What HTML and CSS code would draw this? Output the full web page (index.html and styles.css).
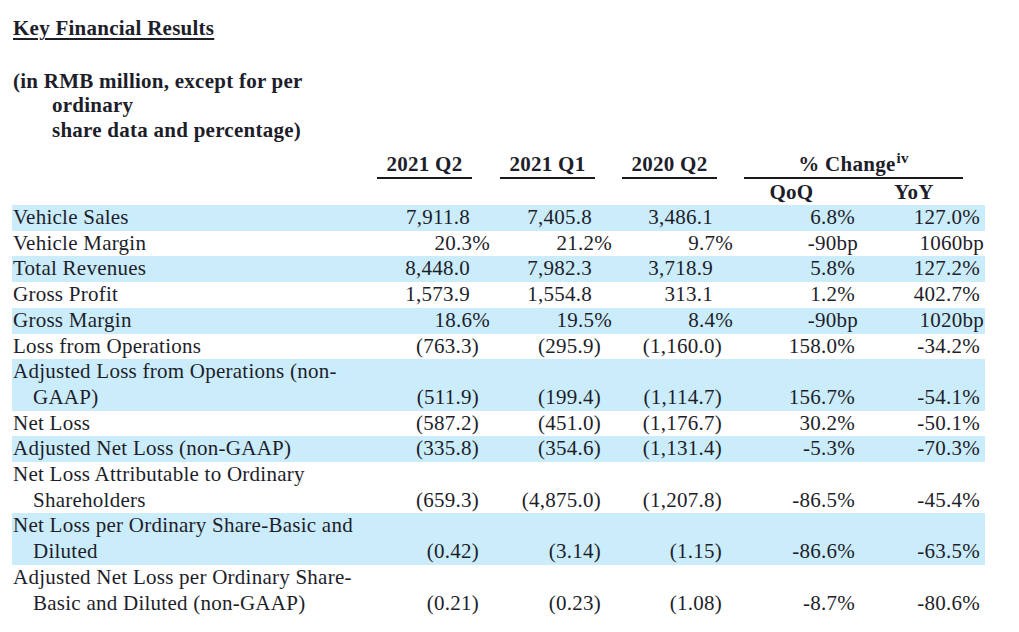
FILE: index.html
```html
<!DOCTYPE html>
<html lang="en">
<head>
<meta charset="utf-8">
<title>Key Financial Results</title>
<link rel="stylesheet" href="styles.css">
</head>
<body>
<div class="page">
  <h1 class="title">Key Financial Results</h1>
  <p class="units">(in RMB million, except for per<br>ordinary<br>share data and percentage)</p>
  <table class="results">
    <colgroup>
      <col class="c-label"><col class="c-a"><col class="c-b"><col class="c-c"><col class="c-qoq"><col class="c-yoy">
    </colgroup>
    <thead>
      <tr class="h1">
        <th></th>
        <th><div class="hl">2021 Q2</div></th>
        <th><div class="hl">2021 Q1</div></th>
        <th><div class="hl">2020 Q2</div></th>
        <th colspan="2"><div class="hl wide">% Change<sup>iv</sup></div></th>
      </tr>
      <tr class="h2">
        <th></th><th></th><th></th><th></th>
        <th class="qoq">QoQ</th>
        <th class="yoy">YoY</th>
      </tr>
    </thead>
    <tbody>
      <tr class="band">
        <td class="lbl">Vehicle Sales</td>
        <td class="n">7,911.8</td><td class="n">7,405.8</td><td class="n">3,486.1</td>
        <td class="q p">6.8%</td><td class="y p">127.0%</td>
      </tr>
      <tr>
        <td class="lbl">Vehicle Margin</td>
        <td class="p">20.3%</td><td class="p">21.2%</td><td class="p">9.7%</td>
        <td class="q b">-90bp</td><td class="y b">1060bp</td>
      </tr>
      <tr class="band">
        <td class="lbl">Total Revenues</td>
        <td class="n">8,448.0</td><td class="n">7,982.3</td><td class="n">3,718.9</td>
        <td class="q p">5.8%</td><td class="y p">127.2%</td>
      </tr>
      <tr>
        <td class="lbl">Gross Profit</td>
        <td class="n">1,573.9</td><td class="n">1,554.8</td><td class="n">313.1</td>
        <td class="q p">1.2%</td><td class="y p">402.7%</td>
      </tr>
      <tr class="band">
        <td class="lbl">Gross Margin</td>
        <td class="p">18.6%</td><td class="p">19.5%</td><td class="p">8.4%</td>
        <td class="q b">-90bp</td><td class="y b">1020bp</td>
      </tr>
      <tr>
        <td class="lbl">Loss from Operations</td>
        <td class="ng">(763.3)</td><td class="ng">(295.9)</td><td class="ng">(1,160.0)</td>
        <td class="q p">158.0%</td><td class="y p">-34.2%</td>
      </tr>
      <tr class="band">
        <td class="lbl">Adjusted Loss from Operations (non-GAAP)</td>
        <td class="ng">(511.9)</td><td class="ng">(199.4)</td><td class="ng">(1,114.7)</td>
        <td class="q p">156.7%</td><td class="y p">-54.1%</td>
      </tr>
      <tr>
        <td class="lbl">Net Loss</td>
        <td class="ng">(587.2)</td><td class="ng">(451.0)</td><td class="ng">(1,176.7)</td>
        <td class="q p">30.2%</td><td class="y p">-50.1%</td>
      </tr>
      <tr class="band">
        <td class="lbl">Adjusted Net Loss (non-GAAP)</td>
        <td class="ng">(335.8)</td><td class="ng">(354.6)</td><td class="ng">(1,131.4)</td>
        <td class="q p">-5.3%</td><td class="y p">-70.3%</td>
      </tr>
      <tr>
        <td class="lbl">Net Loss Attributable to Ordinary Shareholders</td>
        <td class="ng">(659.3)</td><td class="ng">(4,875.0)</td><td class="ng">(1,207.8)</td>
        <td class="q p">-86.5%</td><td class="y p">-45.4%</td>
      </tr>
      <tr class="band">
        <td class="lbl">Net Loss per Ordinary Share-Basic and Diluted</td>
        <td class="ng">(0.42)</td><td class="ng">(3.14)</td><td class="ng">(1.15)</td>
        <td class="q p">-86.6%</td><td class="y p">-63.5%</td>
      </tr>
      <tr>
        <td class="lbl">Adjusted Net Loss per Ordinary Share-Basic and Diluted (non-GAAP)</td>
        <td class="ng">(0.21)</td><td class="ng">(0.23)</td><td class="ng">(1.08)</td>
        <td class="q p">-8.7%</td><td class="y p">-80.6%</td>
      </tr>
    </tbody>
  </table>
</div>
</body>
</html>
```
FILE: styles.css
```css
* { box-sizing: border-box; }

html, body {
  margin: 0;
  padding: 0;
  background: #ffffff;
}

body {
  font-family: "Liberation Serif", "Times New Roman", serif;
  font-size: 21px;
  letter-spacing: 0.25px;
  color: #1d1e2a;
}

.page {
  padding: 15px 0 0 12px;
}

.title {
  margin: 0;
  padding-left: 1px;
  font-size: 21px;
  font-weight: bold;
  line-height: 26px;
  text-decoration: underline;
  text-decoration-thickness: 2px;
  text-underline-offset: 3px;
}

.units {
  margin: 27.5px 0 0;
  padding-left: 40px;
  text-indent: -39px;
  font-weight: bold;
  line-height: 24.5px;
}

.results {
  margin-top: 10px;
  width: 973px;
  border-collapse: collapse;
  border-spacing: 0;
  table-layout: fixed;
  font-size: 21px;
}

.c-label { width: 363px; }
.c-a { width: 123px; }
.c-b { width: 122px; }
.c-c { width: 121px; }
.c-qoq { width: 124px; }
.c-yoy { width: 120px; }

.results th,
.results td {
  padding: 0;
  line-height: 25.7px;
  vertical-align: bottom;
  white-space: nowrap;
}

.results th {
  font-weight: bold;
  text-align: left;
}

.h1 th { line-height: 25px; }

.hl {
  width: 95px;
  margin-left: 2px;
  text-align: center;
  line-height: 25px;
  border-bottom: 2px solid #1a1a1a;
}

.hl.wide {
  width: 219px;
  margin-left: 3px;
}

.hl sup {
  font-size: 15px;
  line-height: 0;
  vertical-align: 8px;
  margin-left: 1px;
}

.h2 th {
  line-height: 26px;
  text-align: center;
}

.results th.qoq { padding-right: 23px; }
.results th.yoy { padding-right: 22px; }

.band td { background: #cbecfb; }

.results td.lbl {
  white-space: normal;
  padding-left: 21px;
  text-indent: -20px;
  text-align: left;
}

.results td.n,
.results td.ng,
.results td.p,
.results td.b { text-align: right; }

.results td.n { padding-right: 28px; }
.results td.ng { padding-right: 19px; }
.results td.p { padding-right: 8px; }

.results td.q.p { padding-right: 10px; }
.results td.q.b { padding-right: 7px; }
.results td.y.p { padding-right: 5px; }
.results td.y.b { padding-right: 1px; }
```
